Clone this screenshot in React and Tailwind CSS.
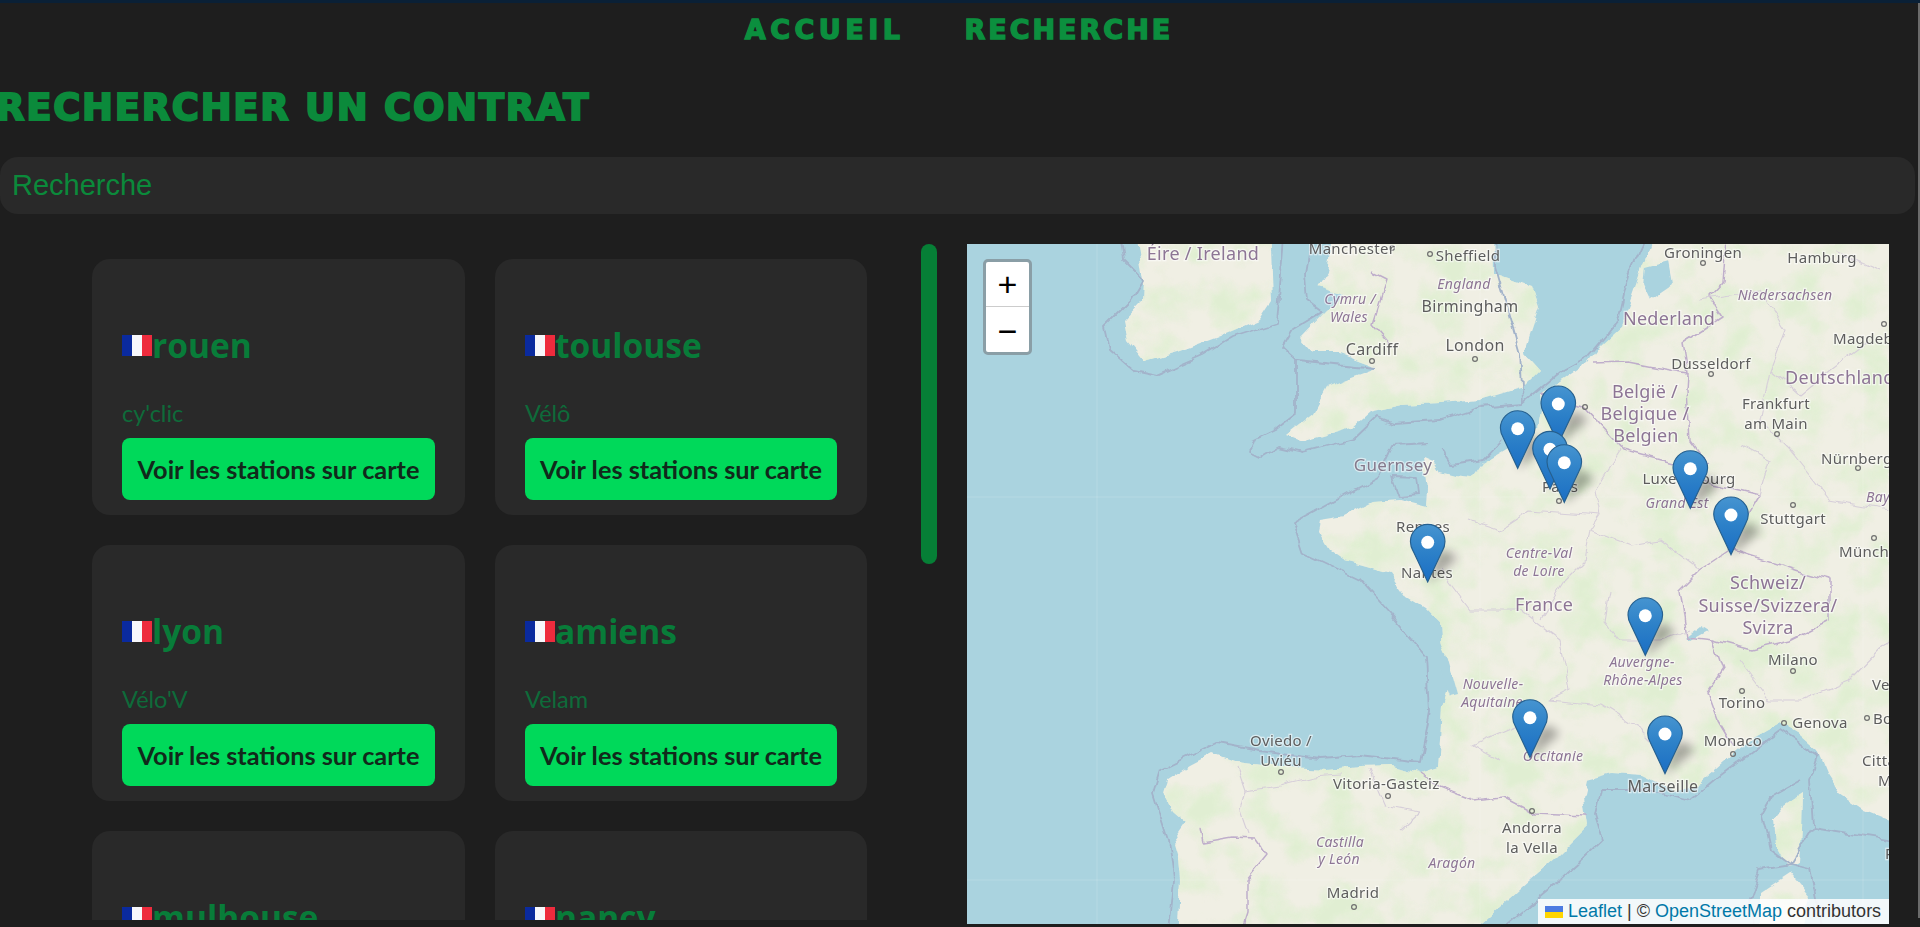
import React from "react";

const cards = [
  { city: "rouen", name: "cy'clic" },
  { city: "toulouse", name: "Vélô" },
  { city: "lyon", name: "Vélo'V" },
  { city: "amiens", name: "Velam" },
  { city: "mulhouse", name: "VéloCité" },
  { city: "nancy", name: "vélOstan'lib" },
];

// map geometry, in page pixels (the svg viewBox starts at the map's corner)
const pts = (list, close) =>
  "M" + list.map((p) => p.join(" ")).join("L") + (close ? "Z" : "");

const continent = [
  [1657, 225], [1640, 273], [1632, 296], [1620, 327], [1600, 345], [1587, 363], [1565, 378], [1540, 393], [1541, 410], [1537, 430],
  [1510, 447], [1483, 463], [1473, 478], [1455, 476], [1440, 472], [1433, 460], [1424, 456], [1428, 490], [1427, 507], [1400, 500], [1373, 502],
  [1345, 516], [1320, 520], [1318, 530], [1330, 550], [1345, 560], [1370, 567], [1390, 573], [1407, 597], [1425, 608], [1440, 623],
  [1443, 663], [1448, 690], [1442, 707], [1440, 740], [1438, 767], [1420, 773], [1390, 766], [1360, 767], [1327, 770], [1287, 768], [1237, 762],
  [1213, 753], [1190, 765], [1167, 780], [1163, 793], [1172, 810], [1187, 823], [1173, 843], [1178, 860], [1180, 880], [1177, 945],
  [1460, 945], [1483, 923], [1520, 890], [1557, 857], [1587, 827], [1583, 797], [1587, 780], [1613, 773], [1643, 775], [1673, 790], [1700, 783], [1723, 763],
  [1750, 740], [1780, 723], [1800, 735], [1817, 750], [1826, 772], [1840, 793], [1865, 810], [1905, 826], [1905, 225],
];
const britain = [
  [1333, 225], [1327, 273], [1318, 287], [1345, 295], [1327, 310], [1300, 338], [1313, 353], [1337, 353], [1377, 368], [1350, 378], [1327, 387],
  [1313, 413], [1285, 435], [1303, 442], [1353, 427], [1370, 412], [1400, 405], [1440, 403], [1480, 400], [1523, 387], [1540, 370],
  [1525, 353], [1540, 307], [1533, 287], [1493, 273], [1492, 225],
];
const ireland = [
  [1135, 225], [1143, 280], [1142, 300], [1123, 320], [1127, 340], [1145, 362], [1177, 353], [1220, 337], [1260, 320], [1273, 300], [1270, 225],
];
const corsica = [[1773, 820], [1785, 805], [1803, 793], [1802, 830], [1800, 863], [1787, 867], [1775, 845]];
const sardinia = [[1760, 893], [1790, 873], [1810, 897], [1800, 945], [1760, 945]];

const borders = [
  [[1540, 393], [1583, 407], [1623, 450], [1673, 463], [1707, 483], [1740, 490], [1760, 495], [1745, 520], [1730, 550], [1700, 570], [1680, 590], [1687, 637], [1713, 640], [1723, 670], [1707, 693], [1717, 720], [1733, 747]],
  [[1713, 640], [1750, 650], [1790, 640], [1830, 620], [1830, 580], [1800, 572], [1730, 550]],
  [[1420, 773], [1440, 787], [1473, 800], [1503, 797], [1533, 813], [1587, 815]],
  [[1200, 828], [1203, 842], [1233, 837], [1255, 838], [1267, 855], [1247, 880], [1247, 913], [1240, 935]],
  [[1727, 225], [1723, 283], [1710, 297], [1723, 317], [1683, 343], [1688, 373], [1687, 390], [1690, 440], [1707, 463]],
  [[1593, 363], [1627, 362], [1653, 367], [1688, 373]],
  [[1373, 273], [1387, 280], [1373, 323], [1390, 343]],
];
const regions = [
  [[1237, 767], [1245, 790], [1240, 810], [1248, 833]],
  [[1245, 790], [1280, 785], [1313, 777], [1340, 775]],
  [[1370, 770], [1385, 805], [1420, 812], [1400, 830]],
  [[1440, 570], [1470, 610], [1520, 610], [1560, 640], [1570, 690], [1550, 700], [1600, 705], [1640, 730], [1650, 740]],
  [[1500, 760], [1472, 745], [1530, 720]],
  [[1540, 620], [1565, 580], [1585, 560], [1590, 530], [1600, 515], [1530, 510], [1500, 530], [1470, 520]],
  [[1590, 530], [1630, 545], [1660, 540], [1700, 570]],
  [[1600, 515], [1595, 490], [1620, 450]],
  [[1610, 590], [1605, 620], [1620, 640], [1660, 640], [1690, 630]],
  [[1700, 300], [1760, 290], [1785, 330], [1770, 370], [1800, 395], [1830, 370], [1870, 340]],
  [[1770, 370], [1760, 420], [1790, 450], [1830, 500], [1890, 510]],
  [[1835, 250], [1880, 270]],
  [[1760, 495], [1770, 460], [1740, 445]],
  [[1889, 640], [1850, 680], [1800, 700], [1770, 700], [1740, 660]],
];
const maritime = [
  [[1117, 225], [1123, 260], [1143, 280], [1130, 302], [1105, 327], [1110, 350], [1133, 370], [1157, 375], [1203, 355], [1233, 337], [1277, 323], [1285, 225]],
  [[1313, 225], [1305, 273], [1307, 300], [1323, 312], [1293, 330], [1283, 347], [1297, 360], [1297, 413], [1275, 430], [1254, 440], [1250, 452], [1260, 457], [1277, 447], [1303, 453], [1353, 440], [1377, 417], [1393, 423], [1440, 420], [1480, 407], [1523, 403], [1563, 370], [1587, 357], [1618, 320], [1630, 270], [1650, 225]],
  [[1297, 360], [1335, 364], [1377, 368]],
  [[1523, 403], [1520, 353], [1505, 300], [1495, 265], [1494, 225]],
  [[1440, 447], [1452, 465], [1483, 460], [1502, 440]],
  [[1427, 443], [1392, 445], [1377, 477], [1293, 523], [1303, 553], [1360, 580], [1390, 613], [1427, 657], [1430, 713], [1420, 762], [1360, 755], [1320, 758], [1260, 750], [1217, 742], [1160, 770], [1153, 793], [1168, 840], [1173, 880], [1167, 940]],
  [[1393, 477], [1400, 497], [1418, 495], [1416, 478], [1393, 477]],
  [[1600, 790], [1595, 815], [1603, 840], [1553, 887], [1490, 940]],
  [[1600, 790], [1650, 790], [1690, 800], [1720, 775], [1780, 730], [1818, 755], [1810, 780], [1813, 827], [1905, 842]],
  [[1800, 780], [1773, 795], [1762, 815], [1770, 850], [1790, 865], [1813, 827]],
  [[1790, 865], [1760, 870], [1750, 900], [1755, 940]],
  [[1790, 865], [1810, 870], [1825, 940]],
];

const dots = [
  [1372, 361], [1430, 254], [1475, 359], [1703, 263], [1711, 374], [1777, 434], [1858, 468], [1793, 505], [1874, 538], [1559, 501],
  [1793, 671], [1742, 691], [1784, 723], [1867, 718], [1733, 754], [1532, 811], [1281, 772], [1388, 796], [1354, 907], [1884, 324], [1585, 407], [1392, 248],
];

const C = "#5d5d5d";
const P = "#8d7595";
const labels = [
  ["Éire / Ireland", 1203, 260, 18, P, false],
  ["Manchester", 1352, 254, 15, C, false],
  ["Sheffield", 1468, 261, 15, C, false],
  ["England", 1464, 289, 14, P, true],
  ["Cymru /", 1350, 304, 14, P, true],
  ["Wales", 1349, 322, 14, P, true],
  ["Birmingham", 1470, 312, 16, C, false],
  ["Cardiff", 1372, 355, 16, C, false],
  ["London", 1475, 351, 16, C, false],
  ["Guernsey", 1393, 471, 17, "#85798c", false],
  ["Rennes", 1423, 532, 15, C, false],
  ["Nantes", 1427, 578, 15, C, false],
  ["Groningen", 1703, 258, 15, C, false],
  ["Hamburg", 1822, 263, 15, C, false],
  ["Niedersachsen", 1785, 300, 14, P, true],
  ["Nederland", 1669, 325, 18, P, false],
  ["Magdeburg", 1833, 344, 15, C, false, "start"],
  ["Dusseldorf", 1711, 369, 15, C, false],
  ["Deutschland", 1785, 384, 18, P, false, "start"],
  ["België /", 1645, 398, 18, P, false],
  ["Belgique /", 1645, 420, 18, P, false],
  ["Belgien", 1646, 442, 18, P, false],
  ["Frankfurt", 1776, 409, 15, C, false],
  ["am Main", 1776, 429, 15, C, false],
  ["Nürnberg", 1821, 464, 15, C, false, "start"],
  ["Luxembourg", 1689, 484, 15, C, false],
  ["Grand Est", 1677, 508, 14, P, true],
  ["Bayern", 1866, 502, 14, P, true, "start"],
  ["Stuttgart", 1793, 524, 15, C, false],
  ["München", 1839, 557, 15, C, false, "start"],
  ["Paris", 1560, 492, 15, C, false],
  ["Centre-Val", 1539, 558, 14, P, true],
  ["de Loire", 1539, 576, 14, P, true],
  ["Schweiz/", 1768, 589, 18, P, false],
  ["Suisse/Svizzera/", 1768, 612, 18, P, false],
  ["Svizra", 1768, 634, 18, P, false],
  ["France", 1544, 611, 18, P, false],
  ["Milano", 1793, 665, 15, C, false],
  ["Auvergne-", 1642, 667, 14, P, true],
  ["Rhône-Alpes", 1643, 685, 14, P, true],
  ["Nouvelle-", 1493, 689, 14, P, true],
  ["Aquitaine", 1492, 707, 14, P, true],
  ["Torino", 1742, 708, 15, C, false],
  ["Genova", 1820, 728, 15, C, false],
  ["Venezia", 1872, 690, 15, C, false, "start"],
  ["Bologna", 1873, 724, 15, C, false, "start"],
  ["Città di", 1862, 766, 15, C, false, "start"],
  ["Marino", 1878, 786, 15, C, false, "start"],
  ["Roma", 1885, 859, 15, C, false, "start"],
  ["Monaco", 1733, 746, 15, C, false],
  ["Occitanie", 1553, 761, 14, P, true],
  ["Marseille", 1663, 792, 16, C, false],
  ["Andorra", 1532, 833, 15, C, false],
  ["la Vella", 1532, 853, 15, C, false],
  ["Aragón", 1452, 868, 14, P, true],
  ["Oviedo /", 1281, 746, 15, C, false],
  ["Uviéu", 1281, 766, 15, C, false],
  ["Vitoria-Gasteiz", 1333, 789, 15, C, false, "start"],
  ["Castilla", 1340, 847, 14, P, true],
  ["y León", 1339, 864, 14, P, true],
  ["Madrid", 1353, 898, 15, C, false],
];

const markers = [
  [1558.3, 404], [1517.7, 428.7], [1550, 449.3], [1564.3, 462.7], [1690.3, 468.7], [1731, 515],
  [1427.7, 542.3], [1645.3, 615.7], [1530, 717.7], [1665, 734],
];

const PIN = "M12.5 .5C5.9.5.5 5.9.5 12.5c0 2.3.7 4.6 1.9 6.6l10.1 21.4 10.1-21.4c1.2-2 1.9-4.3 1.9-6.6C24.5 5.9 19.1.5 12.5.5z";

function FranceMap() {
  return (
    <svg viewBox="967 244 922 680" className="block h-full w-full" fontFamily="'Noto Sans', sans-serif">
      <defs>
        <filter id="wiggle" filterUnits="userSpaceOnUse" x="940" y="215" width="980" height="740">
          <feTurbulence type="fractalNoise" baseFrequency="0.05" numOctaves="3" seed="4" result="n" />
          <feDisplacementMap in="SourceGraphic" in2="n" scale="9" xChannelSelector="R" yChannelSelector="G" />
          <feGaussianBlur stdDeviation="0.7" />
        </filter>
        <filter id="veg" filterUnits="userSpaceOnUse" x="967" y="244" width="922" height="680">
          <feTurbulence type="fractalNoise" baseFrequency="0.028" numOctaves="4" seed="11" />
          <feColorMatrix values="0 0 0 0 0.72  0 0 0 0 0.86  0 0 0 0 0.62  3.2 0 0 0 -1.35" />
          <feGaussianBlur stdDeviation="1.2" />
        </filter>
        <filter id="txt"><feGaussianBlur stdDeviation="0.35" /></filter>
        <filter id="shade" x="-60%" y="-60%" width="220%" height="220%"><feGaussianBlur stdDeviation="5" /></filter>
        <linearGradient id="pin" x1="0" y1="0" x2="0" y2="1">
          <stop offset="0" stopColor="#4694d0" />
          <stop offset="0.5" stopColor="#2c80c8" />
          <stop offset="1" stopColor="#1b6ec4" />
        </linearGradient>
        <clipPath id="land">
          <path d={pts(continent, true)} />
          <path d={pts(britain, true)} />
          <path d={pts(ireland, true)} />
          <path d={pts(corsica, true)} />
          <path d={pts(sardinia, true)} />
        </clipPath>
      </defs>

      <rect x="967" y="244" width="922" height="680" fill="#aad3df" />

      <g filter="url(#wiggle)">
        <g fill="#f0efe4">
          <path d={pts(continent, true)} />
          <path d={pts(britain, true)} />
          <path d={pts(ireland, true)} />
          <path d={pts(corsica, true)} />
          <path d={pts(sardinia, true)} />
        </g>
        <g clipPath="url(#land)">
          <rect x="967" y="244" width="922" height="680" fill="#b8dca0" filter="url(#veg)" opacity="0.8" />
        </g>
        {/* inland water */}
        <g fill="#aad3df">
          <path d={pts([[1645, 268], [1668, 262], [1672, 285], [1650, 300], [1643, 285]], true)} />
          <path d={pts([[1685, 637], [1700, 625], [1708, 630], [1690, 640]], true)} />
          <path d={pts([[1440, 640], [1447, 655], [1458, 695], [1450, 697], [1440, 670]], true)} />
        </g>
        <g fill="none" stroke="#a3b3ca" strokeWidth="1.8" strokeLinejoin="round">
          {maritime.map((m, i) => <path key={i} d={pts(m)} />)}
        </g>
        <g fill="none" stroke="#bfaecb" strokeWidth="1.5" strokeLinejoin="round">
          {borders.map((m, i) => <path key={i} d={pts(m)} />)}
        </g>
        <g fill="none" stroke="#d6ced9" strokeWidth="1.1" strokeLinejoin="round">
          {regions.map((m, i) => <path key={i} d={pts(m)} />)}
        </g>
      </g>

      {/* tile seams */}
      <g stroke="#ffffff" strokeOpacity="0.16" strokeWidth="1">
        <path d="M1097 244V924M1480 244V924M1863 244V924M967 497H1889M967 880H1889" />
      </g>

      <g fill="none" stroke="#6f6f6f" strokeWidth="1.2" filter="url(#txt)">
        {dots.map(([x, y], i) => <circle key={i} cx={x} cy={y} r="2.4" />)}
      </g>

      <g filter="url(#txt)" stroke="#ffffff" strokeOpacity="0.55" strokeWidth="2.4" paintOrder="stroke" style={{ letterSpacing: "0.3px" }}>
        {labels.map(([t, x, y, size, color, italic, anchor]) => (
          <text
            key={t}
            x={x}
            y={y}
            fontSize={size}
            fill={color}
            fontStyle={italic ? "italic" : "normal"}
            textAnchor={anchor || "middle"}
          >
            {t}
          </text>
        ))}
      </g>

      {markers.map(([x, y], i) => (
        <path
          key={"s" + i}
          d={`M${x} ${y + 41}L${x + 30} ${y + 16}L${x + 20} ${y + 8}L${x + 10} ${y + 10}Z`}
          fill="#000"
          opacity="0.3"
          filter="url(#shade)"
        />
      ))}
      {markers.map(([x, y], i) => (
        <g key={i} transform={`translate(${x - 18} ${y - 18.7}) scale(1.44)`}>
          <path d={PIN} fill="url(#pin)" stroke="#26608f" strokeWidth="0.8" />
          <circle cx="12.5" cy="13" r="4.5" fill="#fff" />
        </g>
      ))}
    </svg>
  );
}

function Flag() {
  return (
    <svg viewBox="0 0 3 2" preserveAspectRatio="none" className="h-[21px] w-[30px] shrink-0">
      <rect width="1" height="2" fill="#0a2a9e" />
      <rect x="1" width="1" height="2" fill="#f7f7fb" />
      <rect x="2" width="1" height="2" fill="#ee2b3d" />
    </svg>
  );
}

function Card({ city, name }) {
  return (
    <div className="flex h-[256px] flex-col rounded-[18px] bg-[#292929] px-[30px] pt-[66px]">
      <h2 className="flex h-[40px] items-center text-[33.5px] font-bold leading-[40px] text-[#087c39] [font-family:'Open_Sans',sans-serif]">
        <Flag />
        <span>{city}</span>
      </h2>
      <p className="mt-[33px] h-[30px] text-[23.5px] font-normal leading-[30px] text-[#0e6b3a] [font-family:Lato,sans-serif]">{name}</p>
      <button
        type="button"
        className="mt-[10px] h-[62px] w-full rounded-lg bg-[#00d95a] pt-[1px] text-center text-[25.3px] font-bold text-[#11291b] [font-family:Lato,sans-serif]"
      >
        Voir les stations sur carte
      </button>
    </div>
  );
}

export default function App() {
  return (
    <div className="flex h-[927px] w-full overflow-hidden border-t-[3px] border-[#0a2036] bg-[#1e1e1e]">
      <div className="flex min-w-0 flex-1 flex-col">
        <nav className="flex h-[54px] items-center justify-center gap-[60px] text-[27px] font-bold text-[#0b8f3e] [-webkit-text-stroke:1.4px_#0b8f3e] [font-family:'DejaVu_Sans',sans-serif]">
          <a href="#accueil" className="tracking-[4.5px]">ACCUEIL</a>
          <a href="#recherche" className="tracking-[3px]">RECHERCHE</a>
        </nav>

        <h1 className="-ml-[4px] mt-[31px] h-[40px] text-[37px] font-bold leading-[40px] tracking-[1.7px] text-[#0b8a3b] [-webkit-text-stroke:2px_#0b8a3b] [font-family:'DejaVu_Sans',sans-serif]">
          RECHERCHER UN CONTRAT
        </h1>

        <input
          type="text"
          placeholder="Recherche"
          className="mt-[29px] h-[57px] w-[1915px] rounded-[18px] bg-[#292929] px-[12px] text-[29px] text-[#0b8a3b] outline-none placeholder:text-[#0b8a3b] [font-family:'Liberation_Sans',sans-serif]"
        />

        <div className="mt-[30px] flex h-[680px] items-start">
          <div className="h-[676px] w-[921px] shrink-0 overflow-hidden pl-[92px] pr-[54px] pt-[15px]">
            <div className="grid grid-cols-[373px_372px] gap-x-[30px] gap-y-[30px]">
              {cards.map((card) => (
                <Card key={card.city} {...card} />
              ))}
            </div>
          </div>
          <div className="h-[320px] w-[16px] shrink-0 rounded-full bg-[#067f36]" />
          <div className="relative ml-[30px] h-[680px] w-[922px] shrink-0 overflow-hidden">
            <FranceMap />
            <div className="absolute left-[16px] top-[15px] flex w-[49px] flex-col overflow-hidden rounded-[5px] border-[3px] border-[#8a9ea6] bg-white text-black [font-family:'Liberation_Mono',monospace]">
              <span className="flex h-[45px] items-center justify-center border-b border-[#cccccc] pt-[6px] text-[34px] leading-none">+</span>
              <span className="flex h-[45px] items-center justify-center pt-[8px] text-[34px] leading-none">−</span>
            </div>
            <div className="absolute bottom-0 right-0 flex h-[25px] w-[351px] items-center gap-[5px] bg-white/85 pl-[7px] text-[18px] text-[#333333] [font-family:'Liberation_Sans',sans-serif]">
              <svg viewBox="0 0 12 8" className="h-[12px] w-[18px] shrink-0">
                <rect width="12" height="4" fill="#4C7BE1" />
                <rect y="4" width="12" height="4" fill="#FFD500" />
              </svg>
              <span className="whitespace-nowrap">
                <a href="#leaflet" className="text-[#0078a8]">Leaflet</a> | © <a href="#osm" className="text-[#0078a8]">OpenStreetMap</a> contributors
              </span>
            </div>
          </div>
        </div>
      </div>
      <div className="h-[915px] w-[2px] shrink-0 bg-[#6b6b6b]" />
    </div>
  );
}
